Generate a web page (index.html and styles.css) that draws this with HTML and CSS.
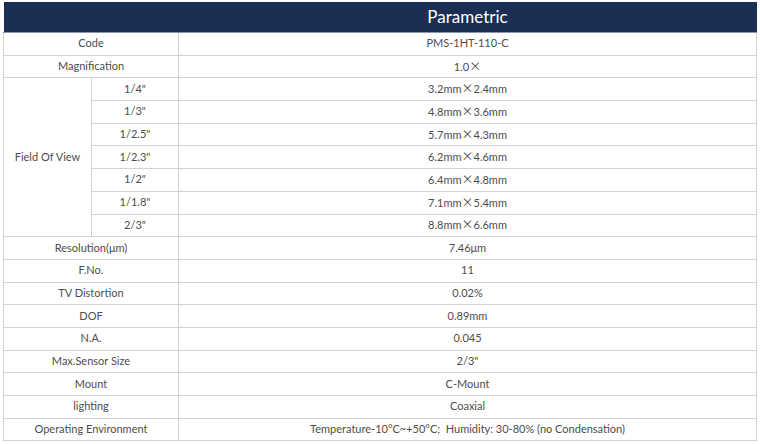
FILE: index.html
```html
<!DOCTYPE html>
<html>
<head>
<meta charset="utf-8">
<link rel="stylesheet" href="styles.css">
</head>
<body>
<table class="spec">
  <colgroup>
    <col class="c1"><col class="c2"><col class="c3">
  </colgroup>
  <thead>
    <tr><th class="blank" colspan="2"></th><th class="title">Parametric</th></tr>
  </thead>
  <tbody>
    <tr><td colspan="2">Code</td><td>PMS-1HT-110-C</td></tr>
    <tr><td colspan="2">Magnification</td><td>1.0<span class="x">×</span></td></tr>
    <tr><td rowspan="7">Field Of View</td><td>1/4"</td><td>3.2mm<span class="x">×</span>2.4mm</td></tr>
    <tr><td>1/3"</td><td>4.8mm<span class="x">×</span>3.6mm</td></tr>
    <tr><td>1/2.5"</td><td>5.7mm<span class="x">×</span>4.3mm</td></tr>
    <tr><td>1/2.3"</td><td>6.2mm<span class="x">×</span>4.6mm</td></tr>
    <tr><td>1/2"</td><td>6.4mm<span class="x">×</span>4.8mm</td></tr>
    <tr><td>1/1.8"</td><td>7.1mm<span class="x">×</span>5.4mm</td></tr>
    <tr><td>2/3"</td><td>8.8mm<span class="x">×</span>6.6mm</td></tr>
    <tr><td colspan="2">Resolution(μm)</td><td>7.46μm</td></tr>
    <tr><td colspan="2">F.No.</td><td>11</td></tr>
    <tr><td colspan="2">TV Distortion</td><td>0.02%</td></tr>
    <tr><td colspan="2">DOF</td><td>0.89mm</td></tr>
    <tr><td colspan="2">N.A.</td><td>0.045</td></tr>
    <tr><td colspan="2">Max.Sensor Size</td><td>2/3"</td></tr>
    <tr><td colspan="2">Mount</td><td>C-Mount</td></tr>
    <tr><td colspan="2">lighting</td><td>Coaxial</td></tr>
    <tr><td colspan="2">Operating Environment</td><td>Temperature-10°C~+50°C;&nbsp; Humidity: 30-80% (no Condensation)</td></tr>
  </tbody>
</table>
</body>
</html>
```
FILE: styles.css
```css
html, body {
  margin: 0;
  padding: 0;
  background: #fff;
}
body {
  padding: 2px 3px 0 3px;
  font-family: Lato, "Open Sans", sans-serif;
  color: #4d4d4d;
}
.spec {
  width: 754px;
  border-collapse: collapse;
  table-layout: fixed;
  font-size: 11px;
}
.c1 { width: 88px; }
.c2 { width: 87px; }
.c3 { width: auto; }
.spec thead th {
  background: #1b2f54;
  height: 28px;
  padding: 0 0 2px 0;
  border-bottom: 1px solid #8796ab;
}
.spec .title {
  color: #fff;
  font-weight: normal;
  font-size: 17px;
  text-align: center;
}
.spec td {
  border: 1px solid #d2d2d2;
  height: 20.7px;
  padding: 0 0 1px 0;
  text-align: center;
  vertical-align: middle;
  line-height: 14px;
}
.x {
  font-family: "Noto Sans CJK SC", sans-serif;
  font-size: 12px;
}
```
